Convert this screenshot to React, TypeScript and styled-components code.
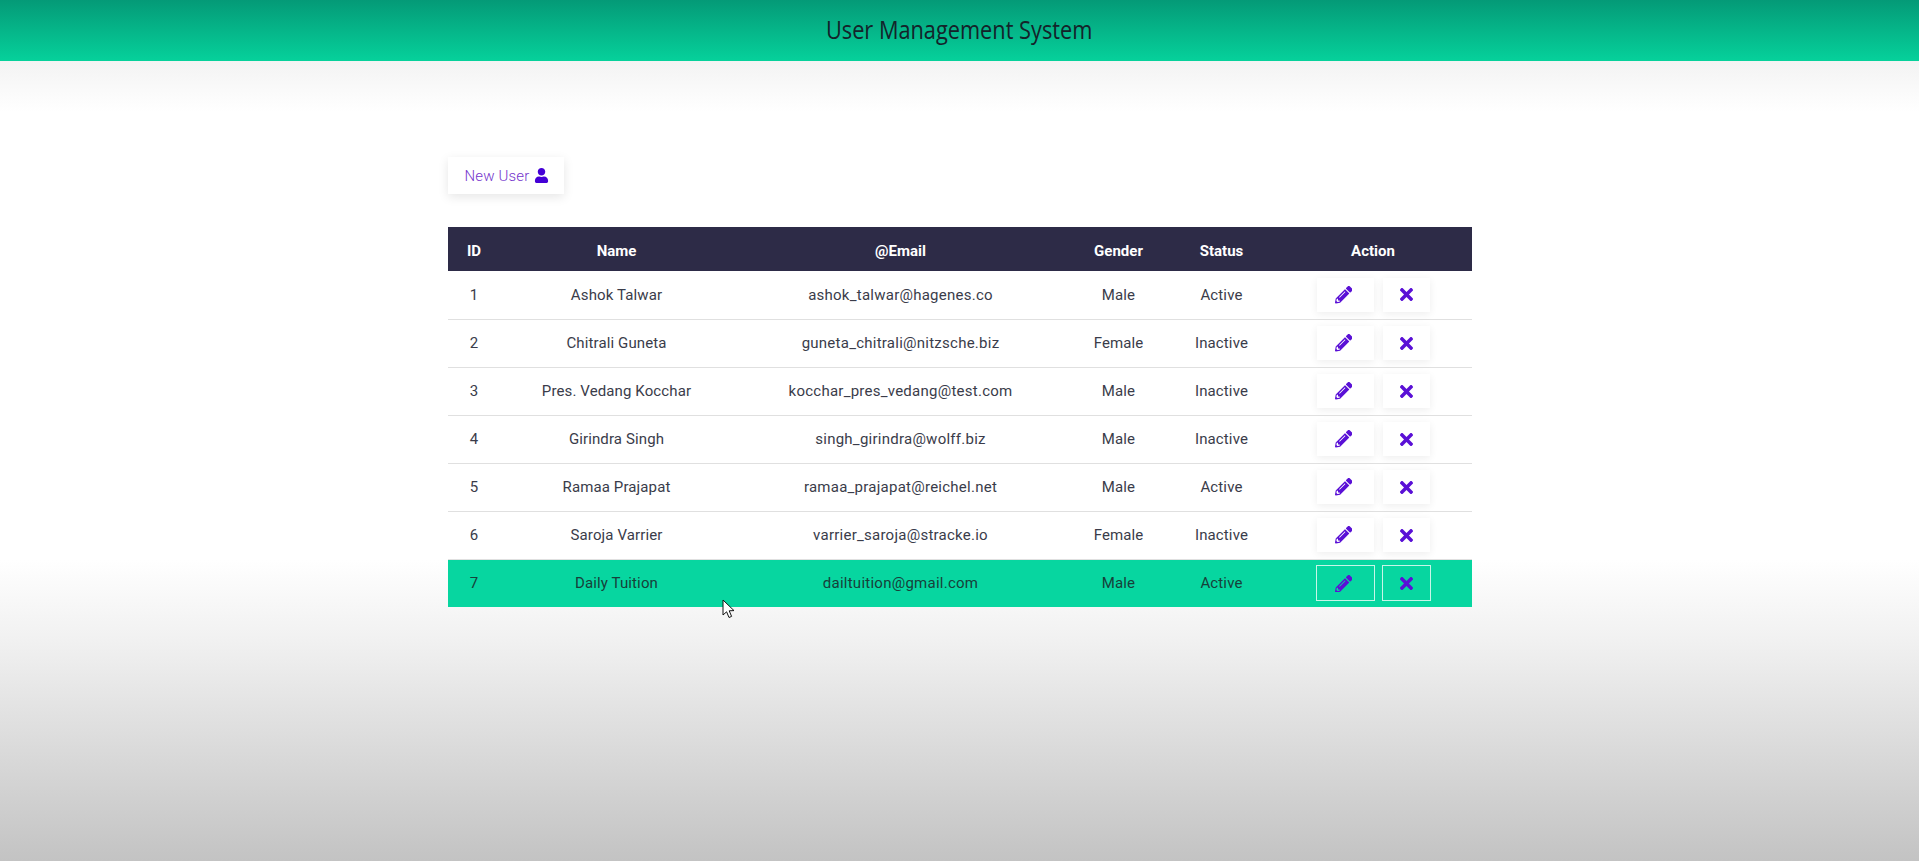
import { createGlobalStyle } from "styled-components";
import styled from "styled-components";
import { FaPencilAlt, FaTimes, FaUser } from "react-icons/fa";

const GlobalStyle = createGlobalStyle`
  html, body {
    margin: 0;
    padding: 0;
    height: 100%;
  }
  body {
    font-family: Roboto, "Liberation Sans", sans-serif;
    overflow: hidden;
  }
`;

const Page = styled.div`
  position: relative;
  height: 861px;
  background: linear-gradient(
    to bottom,
    #f3f3f3 61px,
    #ffffff 112px,
    #ffffff 560px,
    #f1f1f1 640px,
    #c3c3c3 861px
  );
`;
const Header = styled.header`
  box-sizing: border-box;
  height: 61px;
  padding-bottom: 4px;
  display: flex;
  align-items: center;
  justify-content: center;
  background: linear-gradient(to bottom, #049a77, #06d19b);
`;
const Title = styled.h1`
  margin: 0;
  font-family: "Open Sans", sans-serif;
  font-size: 25px;
  font-weight: 400;
  color: #14232a;
  transform: scaleX(0.87);
`;
const Main = styled.main`
  width: 1024px;
  margin: 0 auto;
  padding-top: 96px;
`;
const NewButton = styled.button`
  display: flex;
  align-items: center;
  justify-content: center;
  gap: 5px;
  width: 116px;
  height: 37px;
  padding: 0 0 0 3px;
  border: none;
  background: #fff;
  color: #7434cc;
  font-family: inherit;
  font-size: 15px;
  font-weight: 300;
  letter-spacing: 0.15px;
  box-shadow: 0 3px 10px rgba(0, 0, 0, 0.1);
  svg {
    color: #4400d6;
    font-size: 15px;
  }
`;
const Table = styled.table`
  width: 1024px;
  margin-top: 33px;
  border-collapse: collapse;
  table-layout: fixed;
`;
const HeadRow = styled.tr`
  height: 44px;
  background: #2d2b47;
`;
const HeadCell = styled.th<{ $w: number }>`
  width: ${(p) => p.$w}px;
  padding: 3px 0 0;
  color: #fff;
  font-size: 15px;
  font-weight: 700;
  text-align: center;
`;
const Row = styled.tr<{ $active?: boolean }>`
  height: 48px;
  background: ${(p) => (p.$active ? "#07d6a0" : "transparent")};
  border-bottom: ${(p) => (p.$active ? "none" : "1px solid #e0e0e0")};
`;
const Cell = styled.td<{ $active?: boolean; $wide?: boolean }>`
  padding: 0;
  color: ${(p) => (p.$active ? "#17403a" : "#3a3c4a")};
  font-size: 15px;
  letter-spacing: ${(p) => (p.$wide ? "0.25px" : "0.12px")};
  text-align: center;
`;
const Actions = styled.div`
  display: flex;
  justify-content: center;
  gap: 9px;
`;
const IconButton = styled.button<{ $w: number; $active?: boolean }>`
  display: flex;
  align-items: center;
  justify-content: center;
  box-sizing: border-box;
  width: ${(p) => (p.$active ? p.$w + 2 : p.$w)}px;
  height: ${(p) => (p.$active ? 36 : 34)}px;
  margin: ${(p) => (p.$active ? "-1px" : "0")};
  padding: 0;
  background: ${(p) => (p.$active ? "transparent" : "#fff")};
  border: ${(p) => (p.$active ? "1px solid #c8f5e8" : "none")};
  box-shadow: ${(p) => (p.$active ? "none" : "0 2px 8px rgba(0, 0, 0, 0.07)")};
  color: #5a10d6;
  font-size: 18px;
`;
const PencilIcon = styled(FaPencilAlt)`
  margin-right: 3px;
  font-size: 17.5px;
`;
const CrossIcon = styled(FaTimes)`
  margin-left: 1px;
  font-size: 19px;
`;
const Cursor = styled.svg`
  position: absolute;
  left: 722px;
  top: 599px;
  width: 14px;
  height: 20px;
`;

const users = [
  { id: 1, name: "Ashok Talwar", email: "ashok_talwar@hagenes.co", gender: "Male", status: "Active" },
  { id: 2, name: "Chitrali Guneta", email: "guneta_chitrali@nitzsche.biz", gender: "Female", status: "Inactive" },
  { id: 3, name: "Pres. Vedang Kocchar", email: "kocchar_pres_vedang@test.com", gender: "Male", status: "Inactive" },
  { id: 4, name: "Girindra Singh", email: "singh_girindra@wolff.biz", gender: "Male", status: "Inactive" },
  { id: 5, name: "Ramaa Prajapat", email: "ramaa_prajapat@reichel.net", gender: "Male", status: "Active" },
  { id: 6, name: "Saroja Varrier", email: "varrier_saroja@stracke.io", gender: "Female", status: "Inactive" },
  { id: 7, name: "Daily Tuition", email: "dailtuition@gmail.com", gender: "Male", status: "Active" },
];

function App() {
  return (
    <Page>
      <GlobalStyle />
      <Header>
        <Title>User Management System</Title>
      </Header>
      <Main>
        <NewButton>
          New User <FaUser />
        </NewButton>
        <Table>
          <thead>
            <HeadRow>
              <HeadCell $w={53}>ID</HeadCell>
              <HeadCell $w={232}>Name</HeadCell>
              <HeadCell $w={336}>@Email</HeadCell>
              <HeadCell $w={100}>Gender</HeadCell>
              <HeadCell $w={106}>Status</HeadCell>
              <HeadCell $w={197}>Action</HeadCell>
            </HeadRow>
          </thead>
          <tbody>
            {users.map((u) => {
              const active = u.id === 7;
              return (
                <Row key={u.id} $active={active}>
                  <Cell $active={active}>{u.id}</Cell>
                  <Cell $active={active}>{u.name}</Cell>
                  <Cell $active={active} $wide>
                    {u.email}
                  </Cell>
                  <Cell $active={active}>{u.gender}</Cell>
                  <Cell $active={active}>{u.status}</Cell>
                  <Cell>
                    <Actions>
                      <IconButton $w={57} $active={active}>
                        <PencilIcon />
                      </IconButton>
                      <IconButton $w={47} $active={active}>
                        <CrossIcon />
                      </IconButton>
                    </Actions>
                  </Cell>
                </Row>
              );
            })}
          </tbody>
        </Table>
      </Main>
      <Cursor viewBox="0 0 14 20">
        <path
          d="M1 1 L1 16 L4.6 12.8 L7 18.5 L9.6 17.4 L7.2 11.8 L12 11.6 Z"
          fill="#fff"
          stroke="#111"
          strokeWidth="1"
        />
      </Cursor>
    </Page>
  );
}

export default App;
